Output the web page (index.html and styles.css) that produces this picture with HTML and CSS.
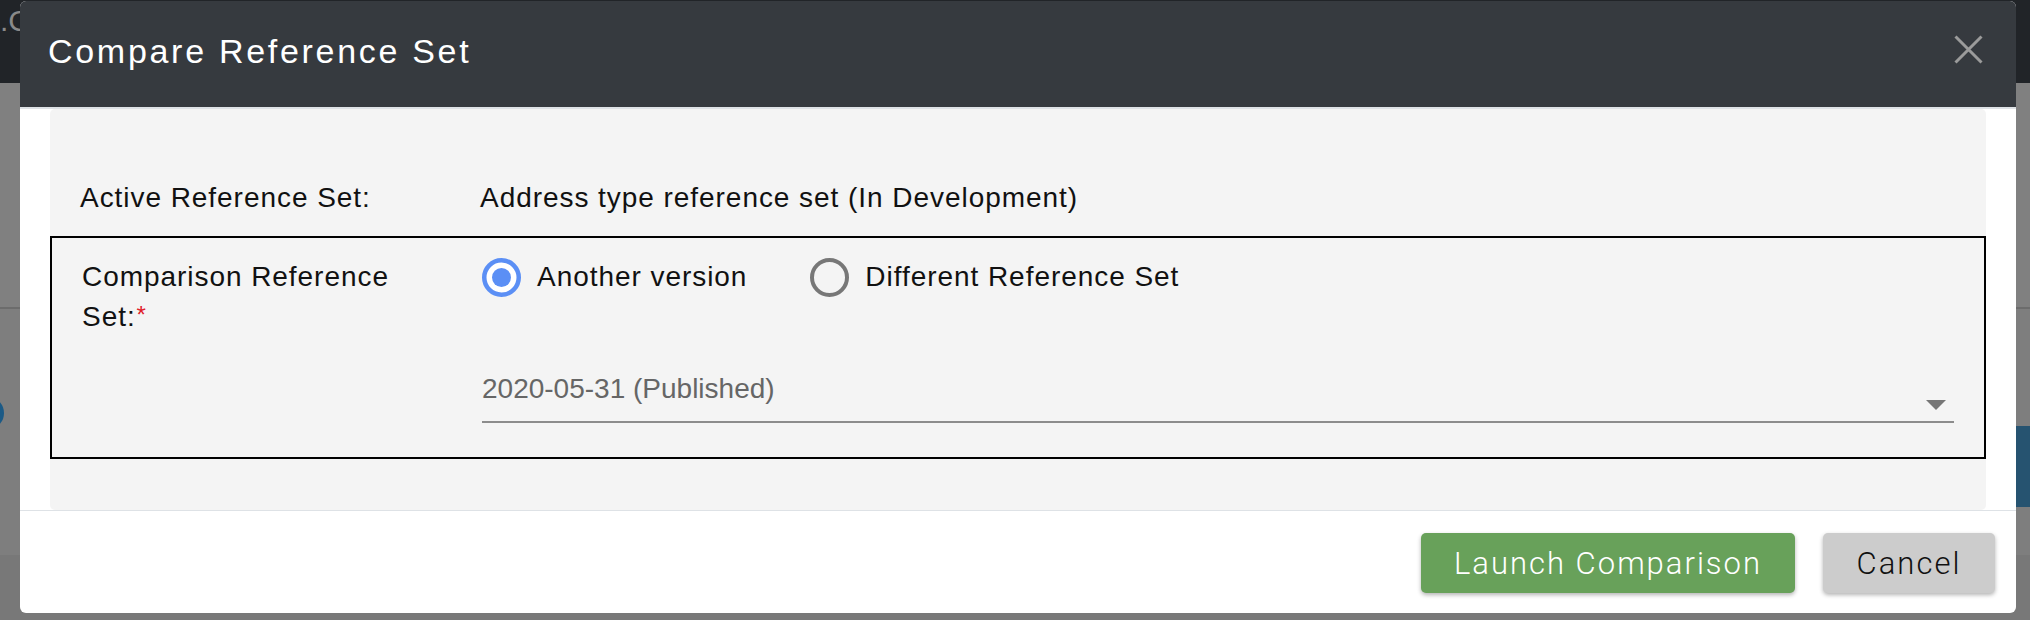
FILE: index.html
```html
<!DOCTYPE html>
<html lang="en">
<head>
<meta charset="utf-8">
<title>Compare Reference Set</title>
<link rel="stylesheet" href="styles.css">
</head>
<body>
<div class="page">
  <div class="backdrop">
    <div class="nav"><span class="nav-frag">.C</span></div>
    <div class="content"></div>
    <div class="content-lower"></div>
    <div class="lower"></div>
  </div>
  <div class="bg-blue-band"></div>
  <div class="bg-blue-dot"></div>

  <div class="modal">
    <div class="modal-header">
      <h2 class="title">Compare Reference Set</h2>
      <svg class="close" width="29" height="29" viewBox="0 0 29 29" aria-label="Close">
        <path d="M1.5 1.5 L27.5 27.5 M27.5 1.5 L1.5 27.5" stroke="#9b9b9b" stroke-width="3" fill="none"/>
      </svg>
    </div>
    <div class="modal-body">
      <div class="panel">
        <div class="row">
          <div class="label">Active Reference Set:</div>
          <div class="value">Address type reference set (In Development)</div>
        </div>
        <div class="box">
          <div class="label label-wrap"><span class="nowrap">Comparison Reference</span> <span class="nowrap">Set:<span class="req">*</span></span></div>
          <div class="value-col">
            <div class="radios">
              <div class="radio">
                <svg width="39" height="39" viewBox="0 0 39 39">
                  <circle cx="19.5" cy="19.5" r="17.25" fill="#ffffff" stroke="#5b8ff5" stroke-width="4.5"/>
                  <circle cx="19.5" cy="19.5" r="9.5" fill="#5b8ff5"/>
                </svg>
                <span class="radio-text">Another version</span>
              </div>
              <div class="radio">
                <svg width="39" height="39" viewBox="0 0 39 39">
                  <circle cx="19.5" cy="19.5" r="17.5" fill="none" stroke="#777777" stroke-width="4"/>
                </svg>
                <span class="radio-text">Different Reference Set</span>
              </div>
            </div>
            <div class="select">
              <span class="select-text">2020-05-31 (Published)</span>
              <span class="caret"></span>
            </div>
          </div>
        </div>
      </div>
    </div>
    <div class="modal-footer">
      <button class="btn btn-green">Launch Comparison</button>
      <button class="btn btn-gray">Cancel</button>
    </div>
  </div>
</div>
</body>
</html>
```
FILE: styles.css
```css
html, body {
  margin: 0;
  padding: 0;
}

body {
  font-family: "Liberation Sans", Arial, sans-serif;
  background: #7f7f7f;
}

.page {
  position: relative;
  width: 2030px;
  height: 620px;
  overflow: hidden;
}

/* page behind the dark overlay */
.backdrop {
  display: flex;
  flex-direction: column;
  height: 100%;
}

.nav {
  height: 83px;
  background: #212428;
  overflow: hidden;
}

.nav-frag {
  display: block;
  margin-left: 0;
  margin-top: 4px;
  font-size: 30px;
  line-height: 34px;
  color: #8a8a8a;
}

.content {
  height: 224px;
  background: #808080;
  border-bottom: 2px solid #6c6c6c;
}

.content-lower {
  flex: 1;
  background: #7e7e7e;
}

.lower {
  height: 65px;
  background: #787878;
}

.bg-blue-band {
  position: absolute;
  right: 0;
  top: 426px;
  width: 20px;
  height: 81px;
  background: #265370;
}

.bg-blue-dot {
  position: absolute;
  left: -22px;
  top: 398px;
  width: 26px;
  height: 30px;
  border-radius: 50%;
  background: #1b5a86;
}

/* modal */
.modal {
  position: absolute;
  left: 20px;
  top: 1px;
  width: 1996px;
  height: 612px;
  background: #ffffff;
  border-radius: 6px;
  display: flex;
  flex-direction: column;
  overflow: hidden;
}

.modal-header {
  height: 108px;
  box-sizing: border-box;
  background: #363a3f;
  border-bottom: 2px solid #dee2e6;
  padding: 30px 33px 0 28px;
  display: flex;
  justify-content: space-between;
  align-items: flex-start;
}

.title {
  margin: 0;
  font-size: 34px;
  line-height: 40px;
  font-weight: normal;
  letter-spacing: 2.7px;
  color: #ffffff;
}

.close {
  margin-top: 4px;
  display: block;
}

.modal-body {
  height: 401px;
  padding: 0 30px;
}

.panel {
  height: 100%;
  box-sizing: border-box;
  background: #f4f4f4;
  border-radius: 5px;
  padding: 69px 0 51px 0;
  font-size: 28px;
  line-height: 40px;
  color: #111111;
  letter-spacing: 0.95px;
}

.row {
  display: grid;
  grid-template-columns: 400px 1fr;
  padding-left: 30px;
}

.box {
  margin-top: 18px;
  border: 2px solid #000000;
  padding: 19px 30px 34px 30px;
  display: grid;
  grid-template-columns: 400px 1fr;
}

.label-wrap {
  padding-right: 60px;
}

.nowrap {
  white-space: nowrap;
}

.req {
  color: #e0202a;
  font-size: 24px;
  line-height: 1;
  margin-left: 1px;
  letter-spacing: 0;
  vertical-align: 3px;
}

.value-col {
  display: flex;
  flex-direction: column;
}

.radios {
  display: flex;
  align-items: center;
  height: 40px;
}

.radio {
  display: flex;
  align-items: center;
  margin-right: 63px;
}

.radio svg {
  display: block;
  margin-right: 16px;
}

.select {
  margin-top: 72px;
  display: flex;
  justify-content: space-between;
  align-items: flex-end;
  padding-bottom: 12px;
  border-bottom: 2px solid #8c8c8c;
  color: #666666;
  letter-spacing: 0;
}

.caret {
  width: 0;
  height: 0;
  border-left: 10px solid transparent;
  border-right: 10px solid transparent;
  border-top: 10px solid #767676;
  margin-right: 8px;
  margin-bottom: -1px;
}

.modal-footer {
  flex: 1;
  border-top: 1px solid #dee2e6;
  padding: 22px 21px 0 0;
  display: flex;
  justify-content: flex-end;
  align-items: flex-start;
}

.btn {
  height: 60px;
  border: none;
  border-radius: 5px;
  font-family: Roboto, "Liberation Sans", Arial, sans-serif;
  font-weight: 300;
  font-size: 31px;
  letter-spacing: 2px;
  box-shadow: 0 2px 4px rgba(0, 0, 0, 0.3);
  padding: 0;
  display: flex;
  align-items: center;
  justify-content: center;
}

.btn-green {
  width: 374px;
  background: #68a15a;
  color: #ffffff;
}

.btn-gray {
  width: 172px;
  margin-left: 28px;
  background: #cccccc;
  color: #111111;
}
```
